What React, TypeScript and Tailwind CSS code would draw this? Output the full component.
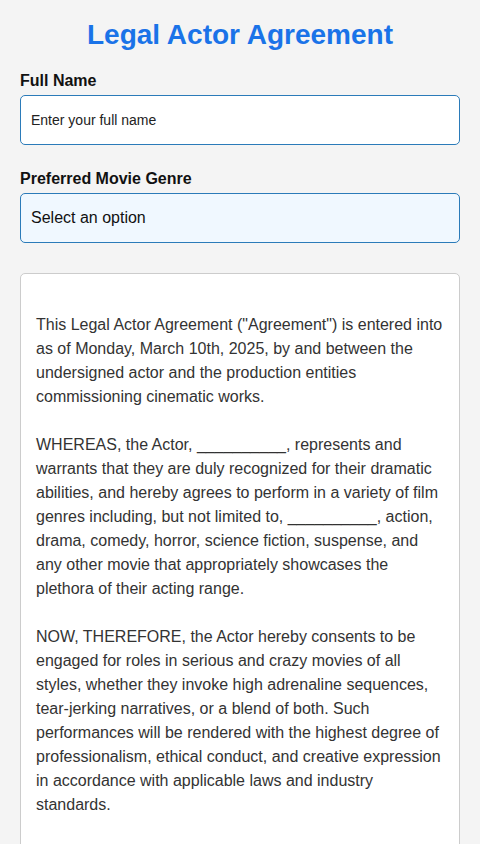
export default function App() {
  const text = `
This Legal Actor Agreement ("Agreement") is entered into as of Monday, March 10th, 2025, by and between the undersigned actor and the production entities commissioning cinematic works.

WHEREAS, the Actor, __________, represents and warrants that they are duly recognized for their dramatic abilities, and hereby agrees to perform in a variety of film genres including, but not limited to, __________, action, drama, comedy, horror, science fiction, suspense, and any other movie that appropriately showcases the plethora of their acting range.

NOW, THEREFORE, the Actor hereby consents to be engaged for roles in serious and crazy movies of all styles, whether they invoke high adrenaline sequences, tear-jerking narratives, or a blend of both. Such performances will be rendered with the highest degree of professionalism, ethical conduct, and creative expression in accordance with applicable laws and industry standards.

IN WITNESS WHEREOF, the parties have executed this Agreement as of the date first written above.
`;
  return (
    <div className="min-h-screen bg-[#f4f4f4] px-5 pt-[18px] pb-5 text-[#222]" style={{ fontFamily: '"Liberation Sans", Arial, sans-serif' }}>
      <h1 className="text-center text-[28px] font-bold leading-[34px] text-[#1a73e8] mb-[20px]">Legal Actor Agreement</h1>
      <label className="block text-base font-bold leading-[18px] mb-[5px] text-[#111]">Full Name</label>
      <input
        type="text"
        placeholder="Enter your full name"
        className="block w-full h-[50px] rounded-[5px] border border-[#2b7bb9] bg-white px-[10px] text-sm text-[#222] placeholder:text-[#222] outline-none"
      />
      <label className="block text-base font-bold leading-[18px] mt-[25px] mb-[5px] text-[#111]">Preferred Movie Genre</label>
      <select className="block w-full h-[50px] appearance-none rounded-[5px] border border-[#2b7bb9] bg-[#f0f8ff] px-[10px] text-base text-[#111] outline-none">
        <option>Select an option</option>
        <option>Action</option>
        <option>Drama</option>
        <option>Comedy</option>
      </select>
      <div className="mt-[30px] rounded-[5px] border border-[#ccc] bg-white p-[15px] text-base leading-6 text-[#333] whitespace-pre-wrap">
        {text}
      </div>
    </div>
  );
}
